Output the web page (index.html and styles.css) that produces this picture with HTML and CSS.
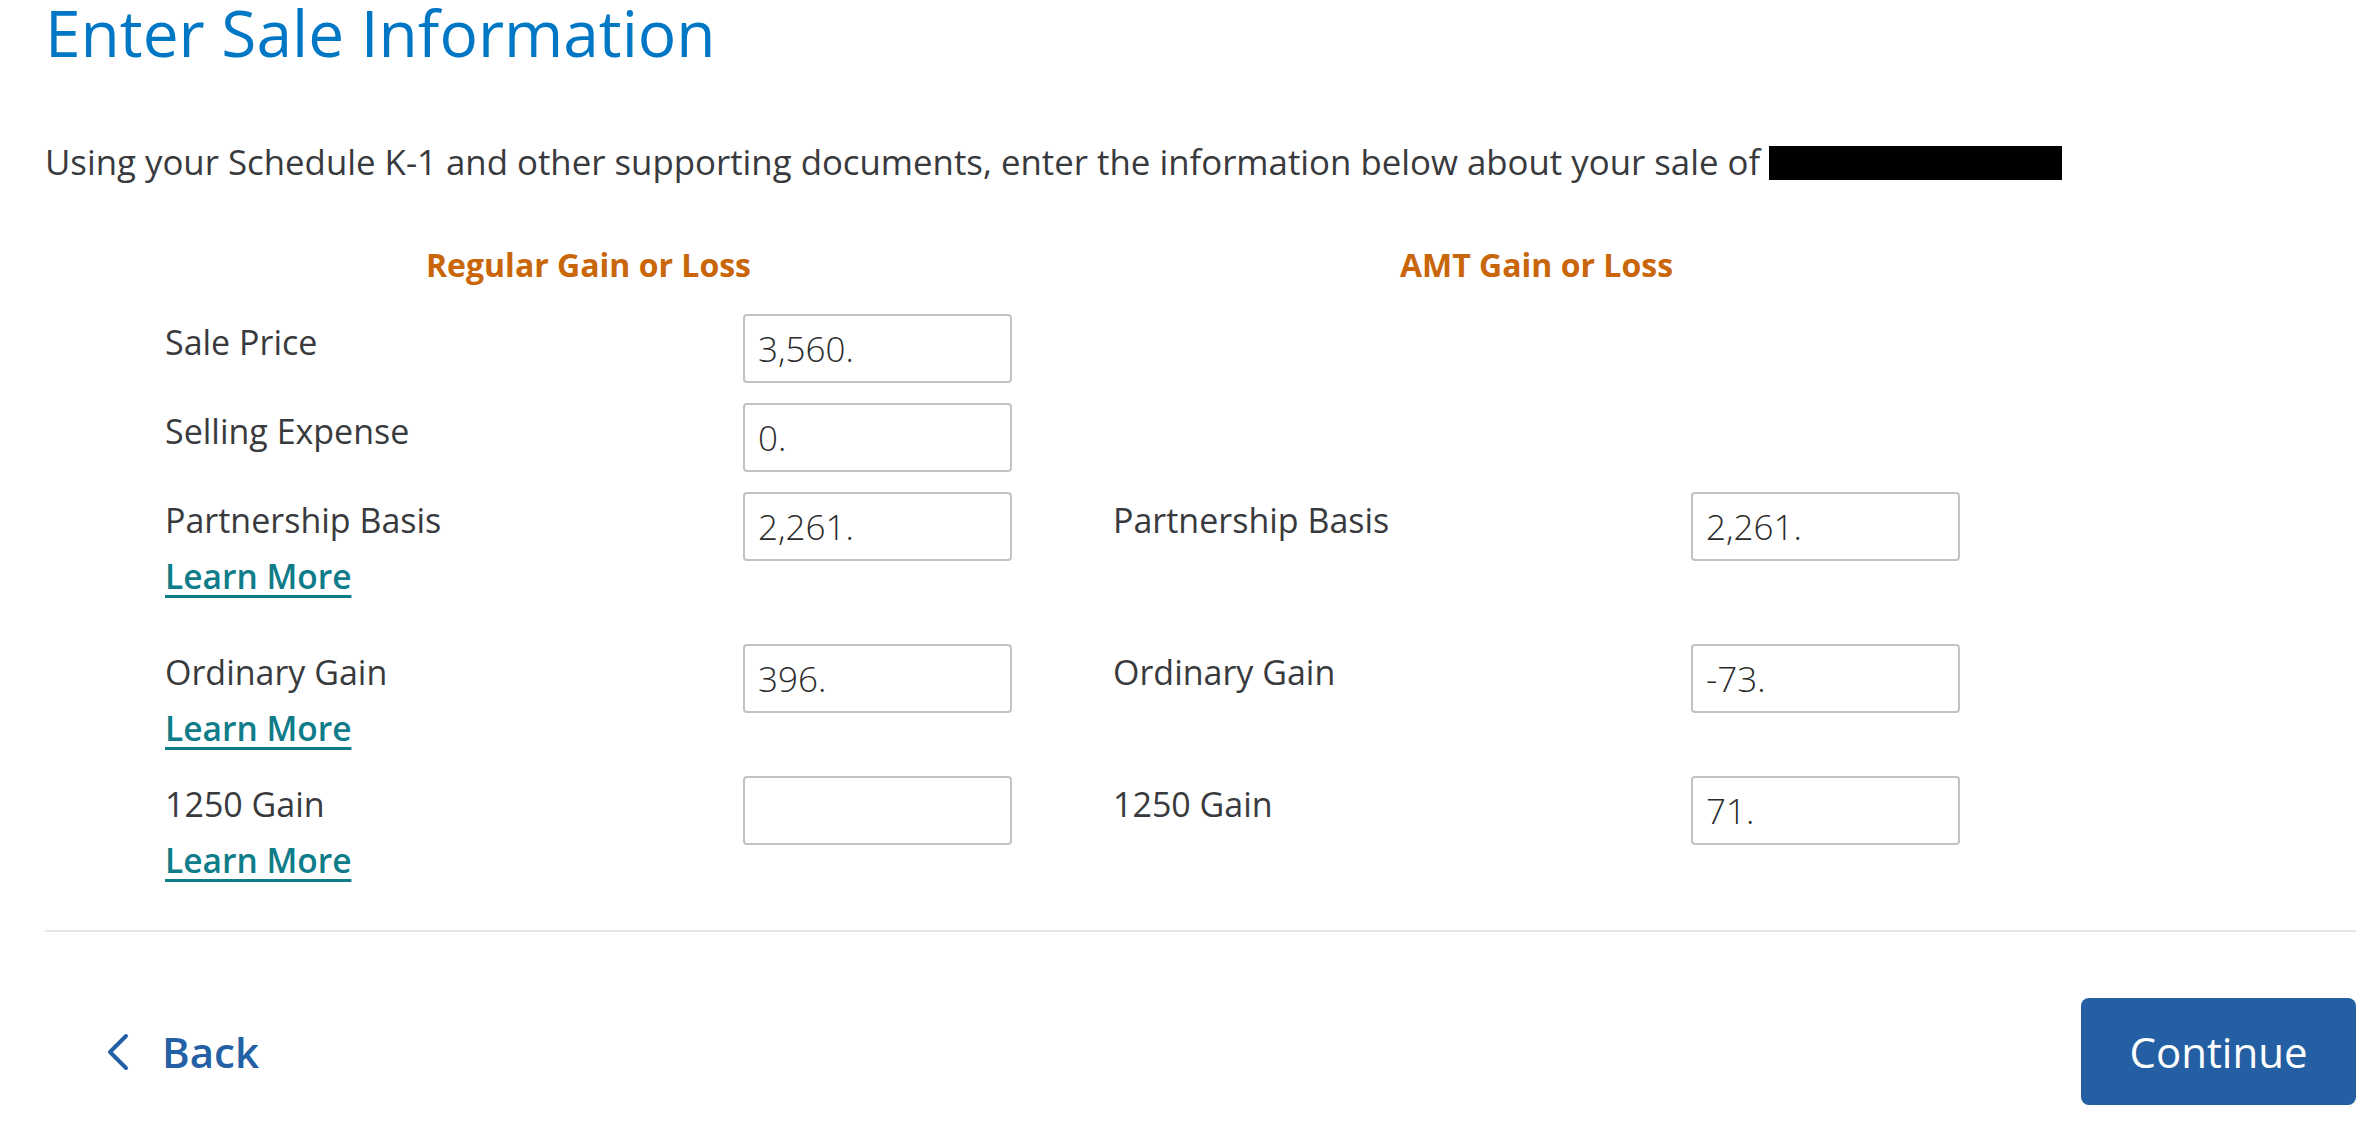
FILE: index.html
```html
<!DOCTYPE html>
<html lang="en">
<head>
<meta charset="utf-8">
<title>Enter Sale Information</title>
<link rel="stylesheet" href="styles.css">
</head>
<body>
<main class="page">
  <h1 class="title">Enter Sale Information</h1>
  <p class="intro">Using your Schedule K-1 and other supporting documents, enter the information below about your sale of <span class="redact"></span></p>

  <section class="form">
    <div class="grid head">
      <div class="col-head">Regular Gain or Loss</div>
      <div class="col-head">AMT Gain or Loss</div>
    </div>

    <div class="grid row">
      <div class="field">
        <div class="label-block"><div class="label">Sale Price</div></div>
        <input class="amount" type="text" value="3,560.">
      </div>
      <div class="field"></div>
    </div>

    <div class="grid row">
      <div class="field">
        <div class="label-block"><div class="label">Selling Expense</div></div>
        <input class="amount" type="text" value="0.">
      </div>
      <div class="field"></div>
    </div>

    <div class="grid row row-wide">
      <div class="field">
        <div class="label-block">
          <div class="label">Partnership Basis</div>
          <a class="learn" href="#">Learn More</a>
        </div>
        <input class="amount" type="text" value="2,261.">
      </div>
      <div class="field">
        <div class="label-block"><div class="label">Partnership Basis</div></div>
        <input class="amount" type="text" value="2,261.">
      </div>
    </div>

    <div class="grid row">
      <div class="field">
        <div class="label-block">
          <div class="label">Ordinary Gain</div>
          <a class="learn" href="#">Learn More</a>
        </div>
        <input class="amount" type="text" value="396.">
      </div>
      <div class="field">
        <div class="label-block"><div class="label">Ordinary Gain</div></div>
        <input class="amount" type="text" value="-73.">
      </div>
    </div>

    <div class="grid row">
      <div class="field">
        <div class="label-block">
          <div class="label">1250 Gain</div>
          <a class="learn" href="#">Learn More</a>
        </div>
        <input class="amount" type="text" value="">
      </div>
      <div class="field">
        <div class="label-block"><div class="label">1250 Gain</div></div>
        <input class="amount" type="text" value="71.">
      </div>
    </div>
  </section>

  <hr class="divider">

  <div class="actions">
    <a class="back" href="#">
      <svg class="chev" width="24" height="40" viewBox="0 0 24 40" aria-hidden="true">
        <polyline points="20,4 4,20 20,36" fill="none" stroke="currentColor" stroke-width="4" stroke-linecap="round" stroke-linejoin="round"/>
      </svg>
      <span>Back</span>
    </a>
    <button class="continue" type="button">Continue</button>
  </div>
</main>
</body>
</html>
```

FILE: styles.css
```css
* {
  box-sizing: border-box;
}

body {
  margin: 0;
  background: #ffffff;
  color: #393a3d;
  font-family: "Open Sans", "Liberation Sans", sans-serif;
}

.page {
  margin: 0 16px 0 45px;
}

.title {
  margin: 0;
  font-size: 64px;
  line-height: 66px;
  font-weight: 400;
  color: #0077c5;
}

.intro {
  margin: 71px 0 0;
  font-size: 34.8px;
  line-height: 49px;
  color: #393a3d;
}

.redact {
  display: inline-block;
  width: 293px;
  height: 34px;
  background: #000000;
  vertical-align: -5px;
}

.form {
  margin-top: 56px;
  padding-left: 120px;
}

.grid {
  display: grid;
  grid-template-columns: 847px 847px;
  column-gap: 101px;
}

.head {
  margin-bottom: 27px;
}

.col-head {
  text-align: center;
  font-size: 32px;
  line-height: 45px;
  font-weight: 700;
  color: #c9660a;
}

.row {
  margin-bottom: 20px;
}

.row-wide {
  margin-bottom: 40px;
}

.field {
  display: flex;
  align-items: flex-start;
}

.label-block {
  flex: 1;
}

.label {
  font-size: 34px;
  line-height: 56px;
  color: #393a3d;
}

.learn {
  display: inline-block;
  font-size: 33.5px;
  line-height: 56px;
  font-weight: 600;
  color: #0f7c8a;
  text-decoration: underline;
  text-decoration-thickness: 3px;
  text-underline-offset: 6px;
}

.amount {
  width: 269px;
  height: 69px;
  border: 2px solid #c2c2c2;
  border-radius: 4px;
  padding: 0 13px;
  font-family: "Open Sans", "Liberation Sans", sans-serif;
  font-size: 35px;
  font-weight: 300;
  color: #2b2b2b;
  background: #ffffff;
  outline: none;
}

.divider {
  margin: 42px 0 0;
  border: 0;
  border-top: 2px solid #e6e6e6;
  height: 0;
}

.actions {
  display: flex;
  justify-content: space-between;
  align-items: center;
  margin-top: 66px;
}

.back {
  display: flex;
  align-items: center;
  gap: 32px;
  padding-left: 61px;
  font-size: 42px;
  font-weight: 600;
  color: #2360a5;
  text-decoration: none;
}

.chev {
  display: block;
}

.continue {
  width: 275px;
  height: 107px;
  border: 0;
  border-radius: 8px;
  background: #255fa3;
  color: #ffffff;
  font-family: "Open Sans", "Liberation Sans", sans-serif;
  font-size: 42px;
  font-weight: 400;
  cursor: pointer;
}
```
